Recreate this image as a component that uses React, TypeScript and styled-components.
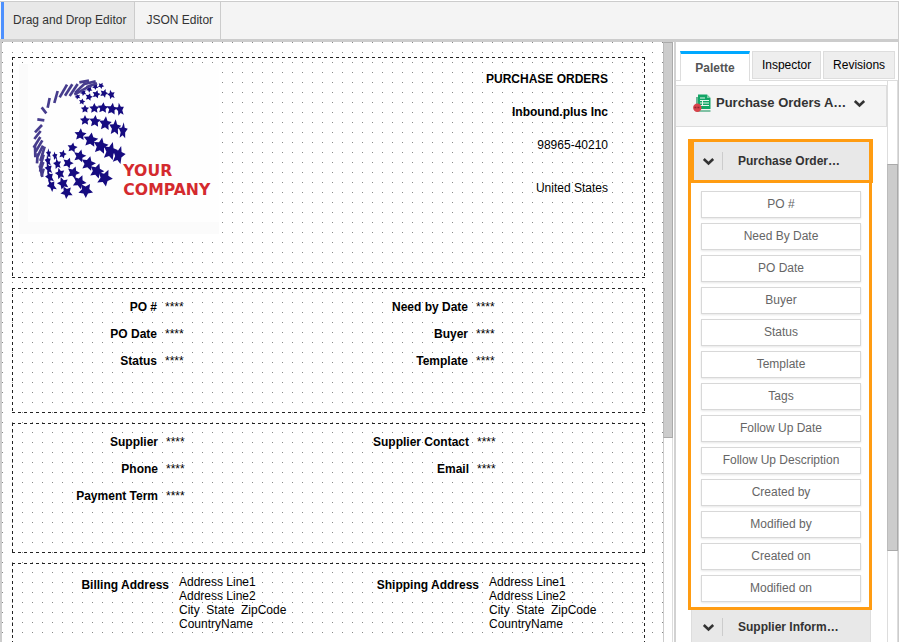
import React from "react";
import styled, { createGlobalStyle } from "styled-components";

const GlobalStyle = createGlobalStyle`
  * { box-sizing: border-box; }
  body {
    margin: 0;
    background: #fff;
    color: #000;
    font-family: "Liberation Sans", Arial, sans-serif;
    font-size: 12px;
    line-height: 14px;
  }
  button { font: inherit; cursor: pointer; }
`;

const Frame = styled.div`
  display: flex;
  flex-direction: column;
  height: calc(100vh - 1px);
  margin: 1px 2px 0 0;
  border-top: 1px solid #ccc;
  border-right: 1px solid #ccc;
  overflow: hidden;
`;

const EditorTabs = styled.nav`
  display: flex;
  flex: none;
  height: 40px;
  padding-left: 1px;
  background: #f4f4f4;
  border-bottom: 3px solid #ccc;
`;

const EditorTab = styled.button<{ $active?: boolean }>`
  padding: ${(p) => (p.$active ? "0 8px 2px 9px" : "0 7px 2px 8px")};
  color: #333;
  background: ${(p) => (p.$active ? "#e8e8e8" : "#f4f4f4")};
  border: 0;
  border-left: ${(p) => (p.$active ? "3px solid #4d90fe" : "3px solid transparent")};
  border-right: 1px solid #ccc;
`;

const Workspace = styled.div`
  display: flex;
  flex: 1;
  min-height: 0;
  border-left: 2px solid #ccc;
`;

const Canvas = styled.main`
  flex: 1;
  display: flex;
  flex-direction: column;
  gap: 10px;
  min-width: 0;
  padding: 15px 18px 0 10px;
  overflow: hidden;
  background: conic-gradient(from 0deg at 1px 1px, transparent 0 270deg, #888 270deg) 0 0 / 10px 10px;
`;

const Section = styled.section<{ $height: number }>`
  flex: none;
  min-height: ${(p) => p.$height}px;
  padding: 1px;
  background:
    repeating-linear-gradient(90deg, #222 0 3px, transparent 3px 6px) top / 100% 1px no-repeat,
    repeating-linear-gradient(90deg, #222 0 3px, transparent 3px 6px) bottom / 100% 1px no-repeat,
    repeating-linear-gradient(#222 0 3px, transparent 3px 6px) left / 1px 100% no-repeat,
    repeating-linear-gradient(#222 0 3px, transparent 3px 6px) right / 1px 100% no-repeat;
`;

const LetterHead = styled.div`
  display: flex;
  justify-content: space-between;
  padding: 6px 36px 0 6px;
`;

const Company = styled.address`
  display: flex;
  flex-direction: column;
  gap: 19px;
  padding-top: 8px;
  font-style: normal;
  text-align: right;
`;

const Country = styled.span`
  padding-top: 10px;
`;

const FieldGrid = styled.dl<{ $label: number; $value: number; $gap?: number; $tall?: boolean }>`
  display: grid;
  grid-template-columns: ${(p) => `${p.$label}px ${p.$value}px ${p.$label}px 1fr`};
  column-gap: ${(p) => p.$gap ?? 8}px;
  margin: 0;
  padding-top: ${(p) => (p.$tall ? 11 : 5)}px;
  line-height: ${(p) => (p.$tall ? 14 : 27)}px;
`;

const Label = styled.dt<{ $column: number; $tall?: boolean }>`
  grid-column: ${(p) => p.$column};
  padding-top: ${(p) => (p.$tall ? 3 : 0)}px;
  font-weight: bold;
  text-align: right;
`;

const Value = styled.dd`
  margin: 0;
`;

const AddressValue = styled(Value)`
  white-space: pre;
`;

const ScrollTrack = styled.div<{ $side?: boolean }>`
  flex: none;
  width: ${(p) => (p.$side ? 11 : 10)}px;
  padding-top: ${(p) => (p.$side ? 83 : 0)}px;
  background: #fff;
  border-left: 1px solid ${(p) => (p.$side ? "#ddd" : "#ccc")};
  border-right: 1px solid #ddd;
`;

const ScrollThumb = styled.div<{ $share: number }>`
  height: ${(p) => p.$share}%;
  margin: 0 -1px;
  background: #ccc;
  border: 1px solid #aaa;
  border-left-color: #bbb;
`;

const SidePanel = styled.aside`
  display: flex;
  flex-direction: column;
  flex: none;
  width: 224px;
  margin-left: 1px;
  border-left: 2px solid #d2d2d2;
`;

const PanelTabs = styled.div`
  display: flex;
  align-items: flex-start;
  flex: none;
  height: 39px;
  padding: 9px 3px 0 4px;
  gap: 2px;
  border-bottom: 1px solid #ddd;
`;

const PanelTab = styled.button<{ $active?: boolean }>`
  flex: ${(p) => (p.$active ? "0 0 70px" : "1 1 auto")};
  height: ${(p) => (p.$active ? 30 : 28)}px;
  padding: ${(p) => (p.$active ? "0" : "0 6px")};
  color: ${(p) => (p.$active ? "#555" : "#000")};
  font-weight: ${(p) => (p.$active ? "bold" : "normal")};
  background: ${(p) => (p.$active ? "#fff" : "#eee")};
  border: 1px solid #ddd;
  ${(p) => p.$active && "border-top: 3px solid #00a8ff; border-bottom: 0;"}
`;

const PanelBody = styled.div`
  display: flex;
  flex: 1;
  min-height: 0;
`;

const PanelContent = styled.div`
  flex: 1;
  min-width: 0;
  padding-top: 4px;
  overflow: hidden;
`;

const ModuleButton = styled.button`
  display: flex;
  align-items: center;
  width: 100%;
  height: 42px;
  padding: 0 20px 6px 17px;
  color: #333;
  font-size: 13px;
  font-weight: bold;
  background: #f4f4f4;
  border: 1px solid #ddd;
  border-left: 0;
`;

const ModuleName = styled.span`
  flex: 1;
  padding-left: 5px;
  text-align: left;
  white-space: nowrap;
`;

const Group = styled.div`
  margin: 12px 15px 0 12px;
  border: 3px solid #ff9c12;
  border-top: 0;
`;

const GroupHeader = styled.button<{ $selected?: boolean }>`
  display: flex;
  align-items: center;
  width: ${(p) => (p.$selected ? "calc(100% + 4px)" : "auto")};
  height: ${(p) => (p.$selected ? 44 : 34)}px;
  padding: 0 20px 0 8px;
  color: #333;
  font-weight: bold;
  text-align: left;
  background: #e8e8e8;
  border: 3px solid #ff9c12;
  border-right-width: 4px;
`;

const NextHeader = styled(GroupHeader)`
  width: calc(100% - 31px);
  margin-left: 15px;
  padding-left: 10px;
  border: 0;
  border-left: 1px solid #ddd;
  border-right: 1px solid #ddd;
`;

const GroupName = styled.span`
  margin-left: 7px;
  padding-left: 15px;
  line-height: 18px;
  border-left: 1px solid #ccc;
  white-space: nowrap;
`;

const FieldList = styled.div`
  display: flex;
  flex-direction: column;
  gap: 5px;
  padding: 8px 8px 5px 10px;
`;

const FieldButton = styled.button`
  height: 27px;
  padding: 0 0 2px;
  color: #666;
  background: #fff;
  border: 1px solid #d8d8d8;
  box-shadow: 0 1px 2px rgba(0, 0, 0, 0.1);
`;

function Chevron() {
  return (
    <svg width="13" height="9" viewBox="0 0 13 9" aria-hidden="true">
      <path d="M1.8 2 L6.5 6.4 L11.2 2" fill="none" stroke="#333" strokeWidth="2.6" />
    </svg>
  );
}

function SheetIcon() {
  return (
    <svg width="18" height="19" viewBox="0 0 18 19" aria-hidden="true">
      <path d="M5 .5h9l3.500 3.500V15H5z" fill="#12a566" />
      <path d="M14 .5v3.500h3.500z" fill="#7fd0a8" />
      <path d="M4 3v14h13.500" fill="none" stroke="#0b8d54" strokeWidth="1.2" />
      <path d="M7 4h5M7 6.500h9M7 9h9M7 11.500h9M9.500 6v6" fill="none" stroke="#e4f6ed" strokeWidth="1" />
      <circle cx="4.3" cy="13.8" r="4.2" fill="#d8434b" />
      <path d="M1.400 13.500h5.800" stroke="#8e2630" strokeWidth="1.400" strokeDasharray="2 1" />
    </svg>
  );
}

/* x, y, radius, horizontal squash, rotation */
const stars: number[][] = [
  [188, 110, 9, 1, 50], [205, 98, 10, 1, 45], [223, 88, 10, 1, 40], [241, 80, 10, 1, 35], [258, 77, 10, 1, 30],
  [201, 125, 10, 1, 10], [222, 111, 12, 1, 15], [244, 103, 13, 1, 15], [267, 100, 14, 0.9, 20], [289, 104, 15, 0.8, -15],
  [210, 147, 13, 1, 0], [238, 145, 16, 1, 0], [264, 144, 17, 1, 5], [291, 147, 19, 0.9, 8], [315, 149, 21, 0.65, -10],
  [210, 181, 16, 1, 0], [240, 184, 19, 0.95, 5], [271, 191, 22, 0.9, 5], [300, 203, 25, 0.75, 5], [324, 213, 26, 0.55, 5],
  [196, 224, 19, 1, 5], [227, 240, 23, 1, 8], [257, 258, 26, 0.9, 10], [286, 274, 29, 0.8, 15], [311, 286, 29, 0.7, 15],
  [172, 263, 16, 1, 10], [194, 288, 20, 1, 15], [220, 311, 23, 1, 15], [245, 333, 24, 0.95, 20], [269, 354, 27, 0.9, 25],
  [143, 283, 14, 0.85, 15], [159, 309, 17, 1, 20], [175, 338, 20, 1, 20], [193, 366, 22, 1, 25], [212, 391, 23, 1, 35],
  [120, 288, 14, 0.6, -10], [127, 312, 17, 0.75, -10], [135, 341, 18, 0.85, -15], [144, 370, 20, 0.9, -20], [155, 397, 20, 0.95, -30],
  [101, 281, 16, 0.5, -5], [99, 303, 18, 0.55, -10], [101, 326, 19, 0.6, -15], [104, 351, 20, 0.65, -20], [110, 377, 21, 0.65, -30],
];

/* x1, y1, x2, y2 of the stars seen edge-on */
const slivers: number[][] = [
  [242, 64, 208, 72], [222, 62, 193, 67], [246, 70, 214, 82], [212, 68, 180, 99],
  [188, 72, 164, 108], [172, 73, 150, 107], [156, 74, 134, 112], [228, 76, 178, 104],
  [128, 93, 118, 129], [104, 114, 98, 143], [80, 142, 94, 160], [67, 178, 88, 181], [81, 195, 60, 217],
  [77, 213, 58, 237], [76, 231, 56, 263], [82, 241, 62, 275], [84, 257, 68, 289],
  [89, 260, 76, 303], [60, 256, 61, 292], [86, 284, 76, 318], [68, 280, 66, 310],
  [85, 306, 75, 335], [74, 316, 82, 351], [86, 326, 80, 348],
];

function starPoints(r: number) {
  return Array.from({ length: 10 }, (_, i) => {
    const a = (Math.PI * i) / 5 - Math.PI / 2;
    const d = i % 2 ? r * 0.5 : r;
    return `${(Math.cos(a) * d).toFixed(1)},${(Math.sin(a) * d).toFixed(1)}`;
  }).join(" ");
}

function CompanyLogo() {
  return (
    <svg width="200" height="170" viewBox="12 12 600 510" role="img" aria-label="Your Company">
      <path d="M12 12h600v510H12z" fill="#fbfbfb" />
      <path d="M39 12h573v474H39z" fill="#fefefe" />
      <g fill="#160b80">
        {stars.map(([x, y, r, sx, rot], i) => (
          <polygon key={i} points={starPoints(r)} transform={`translate(${x} ${y}) rotate(${rot}) scale(${sx} 1)`} />
        ))}
      </g>
      <g stroke="#463c8d" strokeWidth="8">
        {slivers.map(([x1, y1, x2, y2], i) => (
          <line key={i} x1={x1} y1={y1} x2={x2} y2={y2} />
        ))}
      </g>
      <g fill="#d42a2e" fontFamily="'DejaVu Sans', sans-serif" fontWeight="bold" fontSize="47">
        <text x="325" y="347">YOUR</text>
        <text x="325" y="404">COMPANY</text>
      </g>
    </svg>
  );
}

type Pair = [string, string?];

function Fields({ rows, label, value }: { rows: Pair[]; label: number; value: number }) {
  return (
    <FieldGrid $label={label} $value={value}>
      {rows.map(([left, right]) => (
        <React.Fragment key={left}>
          <Label $column={1}>{left}</Label>
          <Value>****</Value>
          {right && (
            <>
              <Label $column={3}>{right}</Label>
              <Value>****</Value>
            </>
          )}
        </React.Fragment>
      ))}
    </FieldGrid>
  );
}

const addressText = "Address Line1\nAddress Line2\nCity  State  ZipCode\nCountryName";

const paletteFields = [
  "PO #", "Need By Date", "PO Date", "Buyer", "Status", "Template", "Tags",
  "Follow Up Date", "Follow Up Description", "Created by", "Modified by", "Created on", "Modified on",
];

export default function App() {
  return (
    <>
      <GlobalStyle />
      <Frame>
        <EditorTabs>
          <EditorTab $active>Drag and Drop Editor</EditorTab>
          <EditorTab>JSON Editor</EditorTab>
        </EditorTabs>
        <Workspace>
          <Canvas>
            <Section $height={221}>
              <LetterHead>
                <CompanyLogo />
                <Company>
                  <strong>PURCHASE ORDERS</strong>
                  <strong>Inbound.plus Inc</strong>
                  <span>98965-40210</span>
                  <Country>United States</Country>
                </Company>
              </LetterHead>
            </Section>
            <Section $height={125}>
              <Fields
                label={144}
                value={151}
                rows={[["PO #", "Need by Date"], ["PO Date", "Buyer"], ["Status", "Template"]]}
              />
            </Section>
            <Section $height={130}>
              <Fields
                label={145}
                value={150}
                rows={[["Supplier", "Supplier Contact"], ["Phone", "Email"], ["Payment Term"]]}
              />
            </Section>
            <Section $height={130}>
              <FieldGrid $label={156} $value={134} $gap={10} $tall>
                <Label $column={1} $tall>Billing Address</Label>
                <AddressValue>{addressText}</AddressValue>
                <Label $column={3} $tall>Shipping Address</Label>
                <AddressValue>{addressText}</AddressValue>
              </FieldGrid>
            </Section>
          </Canvas>
          <ScrollTrack>
            <ScrollThumb $share={66} />
          </ScrollTrack>
          <SidePanel>
            <PanelTabs>
              <PanelTab $active>Palette</PanelTab>
              <PanelTab>Inspector</PanelTab>
              <PanelTab>Revisions</PanelTab>
            </PanelTabs>
            <PanelBody>
              <PanelContent>
                <ModuleButton>
                  <SheetIcon />
                  <ModuleName>Purchase Orders A…</ModuleName>
                  <Chevron />
                </ModuleButton>
                <Group>
                  <GroupHeader $selected>
                    <Chevron />
                    <GroupName>Purchase Order…</GroupName>
                  </GroupHeader>
                  <FieldList>
                    {paletteFields.map((name) => (
                      <FieldButton key={name}>{name}</FieldButton>
                    ))}
                  </FieldList>
                </Group>
                <NextHeader>
                  <Chevron />
                  <GroupName>Supplier Inform…</GroupName>
                </NextHeader>
              </PanelContent>
              <ScrollTrack $side>
                <ScrollThumb $share={81} />
              </ScrollTrack>
            </PanelBody>
          </SidePanel>
        </Workspace>
      </Frame>
    </>
  );
}
